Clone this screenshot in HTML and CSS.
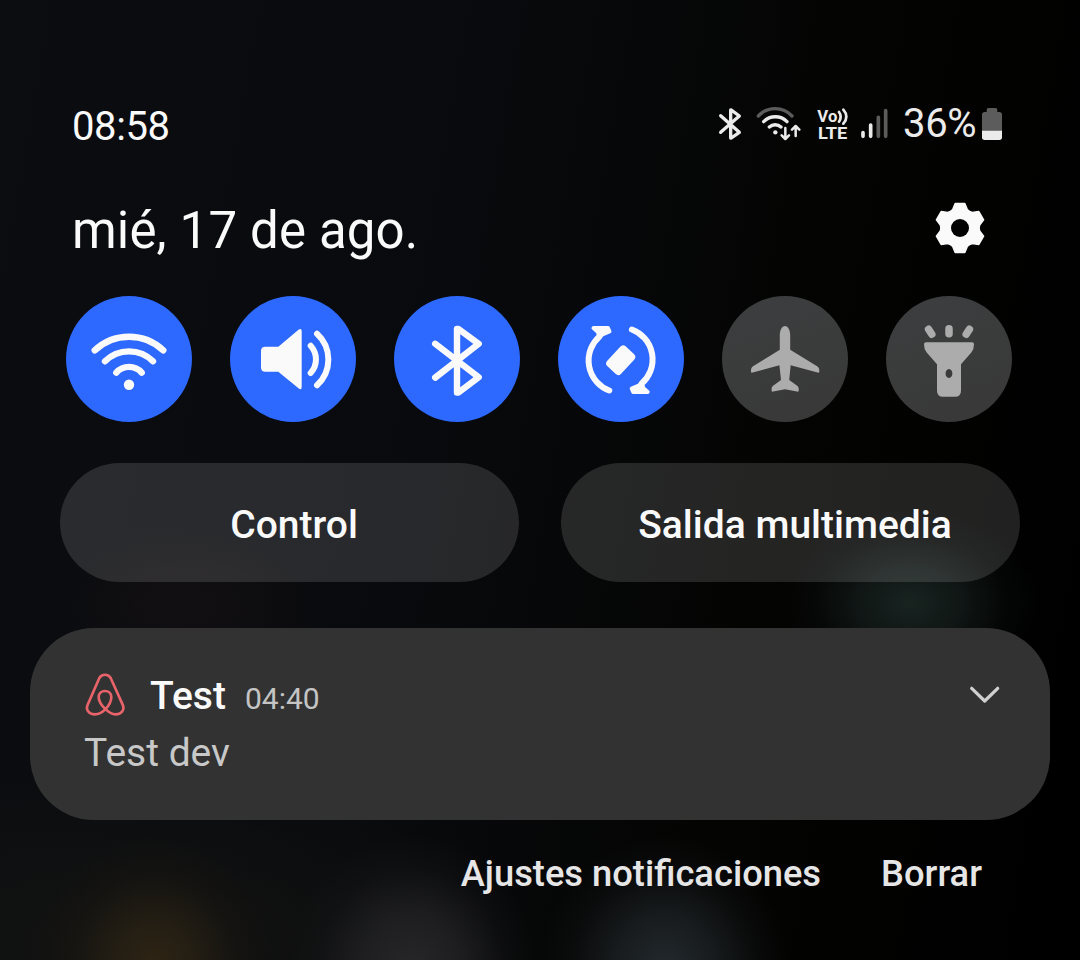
FILE: index.html
```html
<!DOCTYPE html>
<html lang="es">
<head>
    <meta charset="UTF-8">
    <meta name="viewport" content="width=device-width, initial-scale=1.0">
    <title>Panel de notificaciones</title>
    <link rel="stylesheet" href="styles.css">
</head>
<body>
    <div class="panel">
        <header class="status-bar">
            <span class="clock">08:58</span>
            <div class="status-icons">
                <svg class="line" width="24" height="34" viewBox="54 51 72 102" stroke-width="10">
                    <path d="M62 77L118 127L94 144H92V60H94L118 78L62 127"/>
                </svg>
                <svg class="line status-wifi" width="45" height="36" viewBox="168 48 135 108" stroke-width="10">
                    <path class="dim" d="M175 78A69 69 0 0 1 276 78"/>
                    <path d="M191 95A49 49 0 0 1 261 95M208 111A26 26 0 0 1 243 111"/>
                    <circle class="solid" cx="226" cy="127" r="6.5"/>
                    <path stroke-width="7.5" d="M256 114V146M245 136L256 147L267 136M287 138V109M276 119L287 108L298 119"/>
                </svg>
                <svg class="line status-lte" width="32" height="42" viewBox="351 39 96 126" stroke-width="8">
                    <text x="352" y="96" textLength="60" lengthAdjust="spacingAndGlyphs">Vo</text>
                    <text x="354" y="148" textLength="88" lengthAdjust="spacingAndGlyphs">LTE</text>
                    <path d="M417 66Q427 80 417 95M430 59Q448 80 430 101"/>
                </svg>
                <svg class="line status-signal" width="29" height="34" viewBox="480 51 87 102" stroke-width="11">
                    <path d="M489 128V139M512 105V139"/>
                    <path class="dim" d="M535 82V139M557 62V139"/>
                </svg>
                <span class="battery-text">36%</span>
                <svg width="22" height="34" viewBox="843 51 66 102">
                    <path fill="#5c5c5c" d="M860 66V59Q860 54 865 54H887Q892 54 892 59V66H898Q906 66 906 74V124H846V74Q846 66 854 66Z"/>
                    <path fill="#ebebeb" d="M846 122H906V142Q906 150 898 150H854Q846 150 846 142Z"/>
                </svg>
            </div>
        </header>

        <div class="date-row">
            <span class="date">mié, 17 de ago.</span>
            <svg class="gear" width="52" height="52" viewBox="-26 -26 52 52">
                <circle r="18.5"/>
                <path id="tooth" d="M-4.800-24.500H4.800L7.300-18.500L10-16V16L7.300 18.500L4.800 24.500H-4.800L-7.300 18.500L-10 16V-16L-7.300-18.500Z"/>
                <use href="#tooth" transform="rotate(60)"/>
                <use href="#tooth" transform="rotate(120)"/>
                <circle class="gear-hole" r="9"/>
            </svg>
        </div>

        <div class="toggles">
            <div class="toggle on">
                <svg class="line" viewBox="0 0 126 126" stroke-width="6.4">
                    <path d="M28.700 54.300A50 50 0 0 1 97.300 54.300M39 65.300A34 34 0 0 1 87 65.300M50.300 76.600A17 17 0 0 1 75.700 76.600"/>
                    <circle class="solid" cx="63" cy="88.700" r="5.2"/>
                </svg>
            </div>
            <div class="toggle on">
                <svg class="line" viewBox="0 0 126 126" stroke-width="6">
                    <path class="solid" d="M31 55Q31 50.700 35.300 50.700H48.300L68.500 33.700Q71.700 31.700 71.700 35.500V90.500Q71.700 94.700 68.500 92.300L48.300 75.700H35.300Q31 75.700 31 71.500Z"/>
                    <path d="M80.700 49.700A20.300 20.300 0 0 1 80.700 77M87 37.700A35 35 0 0 1 87 89.300"/>
                </svg>
            </div>
            <div class="toggle on">
                <svg class="line" viewBox="0 0 126 126" stroke-width="6.4">
                    <path d="M41.200 47.800L84.700 81.200L64.500 96.500H63V33H64.500L84.700 47.800L41.200 81.600"/>
                </svg>
            </div>
            <div class="toggle on">
                <svg class="line" viewBox="0 0 126 126" stroke-width="6">
                    <g id="turn">
                        <path d="M41.500 40.500A32 32 0 0 0 51.300 94.500"/>
                        <path class="wedge" d="M35.500 32H50L51.500 35.500L44.500 38.500L41 40.500L40 36Z"/>
                    </g>
                    <use href="#turn" transform="rotate(180 62.600 64)"/>
                    <rect class="solid" x="49.200" y="54.700" width="27" height="19" rx="4" transform="rotate(-47 62.700 64.200)"/>
                </svg>
            </div>
            <div class="toggle">
                <svg viewBox="0 0 126 126">
                    <path d="M63 30C66 30 68.200 34 68.200 39V53.800L95.500 70.500Q97.300 71.700 97.300 74V75.500Q97.300 77.200 95.500 76.600L68.700 69.300L67.200 84L75.500 90Q76.700 91 76.700 92.500V94.500Q76.700 96 75 95.600L63 93.300L51.200 95.600Q49.600 96 49.600 94.500V92.500Q49.600 91 50.800 90L59 84L57.400 69.300L30.700 76.600Q29 77.200 29 75.500V74Q29 71.700 30.700 70.500L57.800 53.800V39C57.800 34 60 30 63 30Z"/>
                </svg>
            </div>
            <div class="toggle">
                <svg viewBox="0 0 126 126">
                    <path class="rays" d="M42.600 33.300L45.800 38.200M63 32.700V37.700M83.400 33.300L80.200 38.200"/>
                    <path fill-rule="evenodd" d="M40 46.300H86Q88 46.300 88 48.300Q88 53.300 85.500 56.300L75 68.300V94.700Q75 100.700 69 100.700H57Q51 100.700 51 94.700V68.300L40.500 56.300Q38 53.300 38 48.300Q38 46.300 40 46.300ZM63 73C58.500 73 58.500 82 63 82C67.500 82 67.500 73 63 73Z"/>
                </svg>
            </div>
        </div>

        <div class="actions">
            <button class="action">Control</button>
            <button class="action">Salida multimedia</button>
        </div>

        <section class="notification">
            <div class="notification-head">
                <svg class="app-icon" width="40" height="44" viewBox="45 36 120 132">
                    <path d="M105 146C96 155 86 160 75 160C57 160 46 147 53 131L88 51C95 38 115 38 122 51L158 131C165 147 154 160 137 160C117 160 86 130 86 108C86 84 124 84 124 108C124 121 115 136 105 146Z"/>
                </svg>
                <span class="title">Test</span>
                <span class="time">04:40</span>
                <svg class="line chevron" width="32" height="20" viewBox="0 0 32 20" stroke-width="3.2">
                    <path d="M2.700 3.300L15.700 16L28.700 3.300"/>
                </svg>
            </div>
            <p class="message">Test dev</p>
        </section>

        <footer class="footer">
            <span>Ajustes notificaciones</span>
            <span>Borrar</span>
        </footer>
    </div>
</body>
</html>
```

FILE: styles.css
```css
* {
    box-sizing: border-box;
}
body {
    margin: 0;
    background: #000;
    color: #fafafa;
    font-family: Roboto, "Liberation Sans", sans-serif;
}
.panel {
    width: 1080px;
    height: 960px;
    padding: 98px 30px 0;
    overflow: hidden;
    background:
        radial-gradient(ellipse 120px 130px at 155px 965px, #2e2413 0%, rgba(42, 34, 20, 0.7) 35%, rgba(30, 26, 18, 0.25) 70%, transparent 100%),
        radial-gradient(ellipse 125px 135px at 412px 970px, #272729 0%, rgba(36, 36, 38, 0.75) 40%, rgba(28, 28, 30, 0.25) 75%, transparent 100%),
        radial-gradient(ellipse 125px 135px at 665px 970px, #22292d 0%, rgba(30, 35, 38, 0.75) 40%, rgba(24, 27, 28, 0.25) 75%, transparent 100%),
        radial-gradient(ellipse 130px 95px at 910px 603px, #182320 0%, rgba(20, 29, 27, 0.75) 40%, rgba(12, 18, 16, 0.25) 75%, transparent 100%),
        radial-gradient(ellipse 140px 80px at 185px 605px, rgba(24, 18, 20, 0.6), transparent),
        radial-gradient(ellipse 420px 180px at 120px 940px, rgba(20, 20, 18, 0.9), transparent),
        linear-gradient(100deg, #0b0d11 0%, #090a0d 40%, #040403 68%, #000 95%);
}
.line {
    fill: none;
    stroke: #fafafa;
    stroke-linecap: round;
    stroke-linejoin: round;
}
.solid {
    fill: #fafafa;
    stroke: none;
}
.wedge {
    fill: #fafafa;
    stroke-width: 4;
}

/* status bar */
.status-bar {
    display: flex;
    justify-content: space-between;
    align-items: center;
    height: 56px;
    padding: 0 47px 0 42px;
}
.clock {
    font-size: 40px;
    letter-spacing: -0.4px;
}
.status-icons {
    display: flex;
    align-items: center;
    height: 52px;
    margin-bottom: 4px;
}
.status-icons .line {
    stroke: #ebebeb;
}
.status-icons .solid {
    fill: #ebebeb;
}
.status-icons .dim {
    stroke: #5c5c5c;
}
.status-wifi {
    margin-left: 14px;
}
.status-lte {
    margin-left: 16px;
}
.status-lte text {
    fill: #ebebeb;
    stroke: none;
    font-size: 50px;
    font-weight: 700;
}
.status-signal {
    margin-left: 11px;
}
.battery-text {
    width: 77px;
    margin: 0 1px 1px 14px;
    color: #ebebeb;
    font-size: 40px;
    letter-spacing: -0.3px;
}

/* date */
.date-row {
    display: flex;
    justify-content: space-between;
    align-items: center;
    height: 76px;
    margin-top: 38px;
    padding: 0 64px 0 42px;
}
.date {
    font-size: 51px;
    letter-spacing: 0.15px;
}
.gear {
    margin-bottom: 4px;
    fill: #fafafa;
    stroke: #fafafa;
    stroke-width: 1.5;
    stroke-linejoin: round;
}
.gear-hole {
    fill: #020202;
    stroke: none;
}

/* quick toggles */
.toggles {
    display: flex;
    gap: 38px;
    margin-top: 28px;
    padding: 0 36px;
}
.toggle {
    width: 126px;
    height: 126px;
    border-radius: 50%;
    background: linear-gradient(160deg, #3d3e3f, #383838);
    fill: #acacac;
}
.toggle.on {
    background: #2d68ff;
}
.toggle svg {
    display: block;
    width: 126px;
    height: 126px;
}
.rays {
    stroke: #acacac;
    stroke-width: 7.5;
    stroke-linecap: round;
}

/* buttons */
.actions {
    display: flex;
    gap: 42px;
    margin-top: 41px;
    padding: 0 30px;
}
.action {
    flex: 1;
    height: 119px;
    padding: 4px 0 0 9px;
    border: 0;
    border-radius: 60px;
    background: rgba(255, 255, 255, 0.13);
    color: #fafafa;
    font: 500 39px Roboto, "Liberation Sans", sans-serif;
}

/* notification */
.notification {
    height: 192px;
    margin-top: 46px;
    padding: 42px 49px 0 55px;
    border-radius: 64px;
    background: #323232;
}
.notification-head {
    display: flex;
    align-items: center;
    height: 48px;
}
.app-icon {
    margin-top: 1px;
    fill: none;
    stroke: #e8646a;
    stroke-width: 8;
}
.title {
    margin: 3px 0 0 25px;
    font-size: 39px;
    font-weight: 500;
}
.time {
    margin: 8px 0 0 19px;
    color: #c4c4c4;
    font-size: 30px;
}
.chevron {
    margin: 2px 0 0 auto;
    stroke: #d0d0d0;
}
.message {
    margin: 12px 0 0 -1px;
    color: #c8c8c8;
    font-size: 39px;
    line-height: 46px;
}

/* footer */
.footer {
    display: flex;
    justify-content: flex-end;
    gap: 60px;
    margin-top: 32px;
    padding-right: 68px;
    color: #e6e6e6;
    font-size: 36.3px;
    font-weight: 500;
}
```
